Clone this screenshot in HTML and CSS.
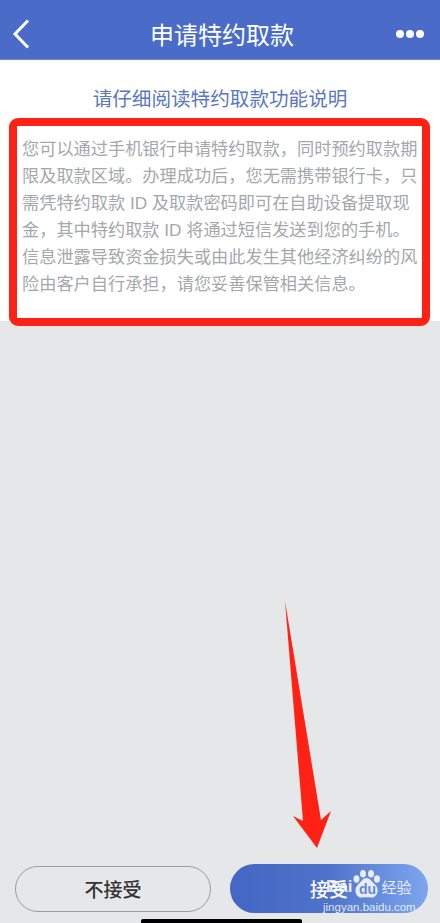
FILE: index.html
```html
<!DOCTYPE html>
<html lang="zh-CN">
  <head>
    <meta charset="UTF-8" />
    <title>申请特约取款</title>
    <link rel="stylesheet" href="styles.css">
  </head>
  <body>
    <div class="page">
      <div class="topbar">
        <svg class="back-icon" width="20" height="30" viewBox="0 0 20 30">
          <path d="M17 1.5 L4 15 L17 28.5" />
        </svg>
        <h1 class="topbar-title">申请特约取款</h1>
        <div class="more">
          <span class="dot"></span>
          <span class="dot"></span>
          <span class="dot"></span>
        </div>
      </div>

      <div class="notice">
        <h2 class="notice-title">请仔细阅读特约取款功能说明</h2>
        <p class="notice-text">您可以通过手机银行申请特约取款，同时预约取款期限及取款区域。办理成功后，您无需携带银行卡，只需凭特约取款 ID 及取款密码即可在自助设备提取现金，其中特约取款 ID 将通过短信发送到您的手机。信息泄露导致资金损失或由此发生其他经济纠纷的风险由客户自行承担，请您妥善保管相关信息。</p>
      </div>

      <div class="spacer"></div>

      <div class="actions">
        <button class="btn btn-decline">不接受</button>
        <button class="btn btn-accept">接受</button>
      </div>
      <div class="home-row">
        <div class="home-bar"></div>
      </div>

      <!-- annotations drawn over the screenshot -->
      <div class="red-box"></div>
      <svg class="red-arrow" width="440" height="923" viewBox="0 0 440 923">
        <polygon points="285,601 321,820 331,811 317,848 293,816 303,821" />
      </svg>

      <!-- watermark -->
      <div class="watermark">
        <div class="wm-top">
          <span class="wm-bai">Bai</span>
          <svg class="wm-paw" width="27" height="28" viewBox="0 0 27 28">
            <ellipse cx="3.5" cy="9" rx="3" ry="3.8" />
            <ellipse cx="10" cy="3.8" rx="3" ry="3.8" />
            <ellipse cx="18" cy="3.8" rx="3" ry="3.8" />
            <ellipse cx="24" cy="9" rx="3" ry="3.8" />
            <path d="M13.5 8 C17 8 18 11 21 13.5 C24 16 25 18 24.5 21.5 C24 25.5 21 28 18 27.5 C15.5 27 11.5 27 9 27.5 C6 28 3 25.5 2.5 21.5 C2 18 3.5 16 6 13.5 C9 11 10 8 13.5 8 Z" />
          </svg>
          <span class="wm-du">du</span>
          <span class="wm-cn">经验</span>
        </div>
        <div class="wm-url">jingyan.baidu.com</div>
      </div>
    </div>
  </body>
</html>
```

FILE: styles.css
```css
* {
  box-sizing: border-box;
  font-family: "Liberation Sans", "Noto Sans CJK SC", sans-serif;
}

html,
body {
  margin: 0;
  padding: 0;
}

.page {
  position: relative;
  display: flex;
  flex-direction: column;
  width: 440px;
  height: 923px;
  overflow: hidden;
  background-color: #e6e7e9;
}

/* top bar */
.topbar {
  display: flex;
  align-items: center;
  justify-content: space-between;
  height: 60px;
  padding: 8px 16px 0 11px;
  background-color: #4a6cc8;
  border-bottom: 1px solid #6f8bd6;
}

.back-icon path {
  fill: none;
  stroke: #fff;
  stroke-width: 3;
}

.topbar-title {
  margin: 0 0 0 17px;
  font-size: 24px;
  font-weight: 400;
  color: #fff;
}

.more {
  display: flex;
  gap: 2px;
}

.dot {
  width: 8px;
  height: 8px;
  border-radius: 50%;
  background-color: #fff;
}

/* notice text */
.notice {
  height: 261px;
  padding: 26px 22px 0;
  background-color: #fff;
}

.notice-title {
  margin: 0;
  font-size: 19.6px;
  line-height: 26px;
  font-weight: 400;
  text-align: center;
  color: #5a77c0;
}

.notice-text {
  margin: 24px 0 0;
  font-size: 17.2px;
  line-height: 27px;
  color: #a5a7ad;
}

.spacer {
  flex: 1;
}

/* bottom buttons */
.actions {
  display: flex;
  align-items: center;
  justify-content: space-between;
  padding: 0 12px 0 15px;
}

.btn {
  font-size: 19px;
  font-weight: 500;
  border-radius: 25px;
}

.btn-decline {
  width: 196px;
  height: 46px;
  color: #333;
  background: transparent;
  border: 1px solid #9a9b9f;
}

.btn-accept {
  width: 198px;
  height: 49px;
  color: #fff;
  border: none;
  background: linear-gradient(90deg, #4466c4 0%, #4f73cb 50%, #7da6ee 100%);
}

.home-row {
  display: flex;
  justify-content: center;
  height: 4px;
  margin-top: 6px;
  padding-left: 3px;
}

.home-bar {
  width: 161px;
  height: 4px;
  background-color: #000;
  border-radius: 2px 2px 0 0;
}

/* red annotations */
.red-box {
  position: absolute;
  left: 9px;
  top: 118px;
  width: 421px;
  height: 208px;
  border: 8px solid #ff2113;
  border-radius: 9px;
}

.red-arrow {
  position: absolute;
  left: 0;
  top: 0;
}

.red-arrow polygon {
  fill: #ff2113;
}

/* baidu watermark */
.watermark {
  position: absolute;
  left: 323px;
  top: 870px;
  width: 90px;
  color: rgba(255, 255, 255, 0.85);
}

.wm-top {
  display: flex;
  align-items: flex-end;
  height: 28px;
}

.wm-bai {
  margin-left: 3px;
  font-size: 17px;
  font-weight: 700;
  line-height: 20px;
  margin-bottom: 1px;
}

.wm-paw {
  flex-shrink: 0;
  margin-left: 1px;
  fill: rgba(255, 255, 255, 0.85);
}

.wm-du {
  position: absolute;
  left: 36px;
  top: 12px;
  font-size: 14px;
  line-height: 14px;
  font-weight: 700;
  color: #6488d8;
}

.wm-cn {
  margin-left: 1px;
  font-size: 15px;
  line-height: 20px;
  margin-bottom: 0;
}

.wm-url {
  margin-top: 3px;
  font-size: 11.5px;
  line-height: 13px;
  white-space: nowrap;
}
```
